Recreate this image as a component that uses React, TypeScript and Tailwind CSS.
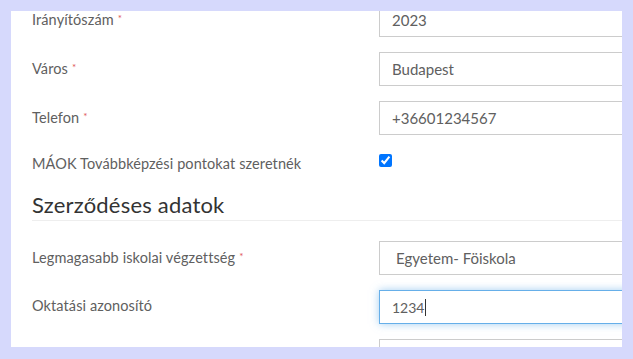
import type { ReactNode } from "react";

function Req() {
  return <span className="ml-1 align-[3px] text-[10px] text-[#e05555]">*</span>;
}

function Row({ label, required, children }: { label: string; required?: boolean; children: ReactNode }) {
  return (
    <div className="flex h-[34px] items-center">
      <div className="w-[347px] shrink-0 pb-[3px] text-[14.5px] leading-[15px] tracking-[0.1px] text-[#606060]">
        {label}
        {required && <Req />}
      </div>
      {children}
    </div>
  );
}

function Field({ value, focused, select }: { value: string; focused?: boolean; select?: boolean }) {
  return (
    <div
      className={
        focused
          ? "flex h-[34px] w-[300px] shrink-0 items-center border border-[#66afe9] bg-white pl-3 text-[14px] text-[#606060] shadow-[0_0_8px_rgba(102,175,233,0.6)]"
          : select
            ? "flex h-[34px] w-[300px] shrink-0 items-center border border-[#ccc] bg-white pl-4 text-[15px] text-[#606060]"
            : "flex h-[34px] w-[300px] shrink-0 items-center border border-[#ccc] bg-white pl-3 text-[15px] text-[#606060]"
      }
    >
      {value}
      {focused && <span className="ml-[1px] h-[17px] w-px bg-[#333]" />}
    </div>
  );
}

export default function App() {
  return (
    <div className="h-[359px] w-[633px] bg-[#d6d9fc] p-[11px] font-['Lato',sans-serif]">
      <div className="h-[336px] w-[611px] overflow-hidden bg-white">
        <div className="-mt-[8px] flex flex-col pl-[21px]">
          <div className="flex flex-col gap-[15px]">
            <Row label="Irányítószám" required>
              <Field value="2023" />
            </Row>
            <Row label="Város" required>
              <Field value="Budapest" />
            </Row>
            <Row label="Telefon" required>
              <Field value="+36601234567" />
            </Row>
          </div>
          <div className="mt-[15px] flex h-[26px] items-start">
            <div className="mt-[4px] w-[347px] shrink-0 text-[14.5px] leading-5 tracking-[0.1px] text-[#606060]">
              MÁOK Továbbképzési pontokat szeretnék
            </div>
            <input type="checkbox" checked readOnly className="m-0 mt-[4px] h-[13px] w-[13px]" />
          </div>
          <h2 className="mt-[15px] text-[22px] leading-[28px] tracking-[0.2px] text-[#333]">Szerződéses adatok</h2>
          <div className="mt-[1px] h-px bg-[#eee]" />
          <div className="mt-[20px] flex flex-col gap-[15px]">
            <Row label="Legmagasabb iskolai végzettség" required>
              <Field value="Egyetem- Föiskola" select />
            </Row>
            <Row label="Oktatási azonosító">
              <Field value="1234" focused />
            </Row>
            <Row label="">
              <Field value="" />
            </Row>
          </div>
        </div>
      </div>
    </div>
  );
}
